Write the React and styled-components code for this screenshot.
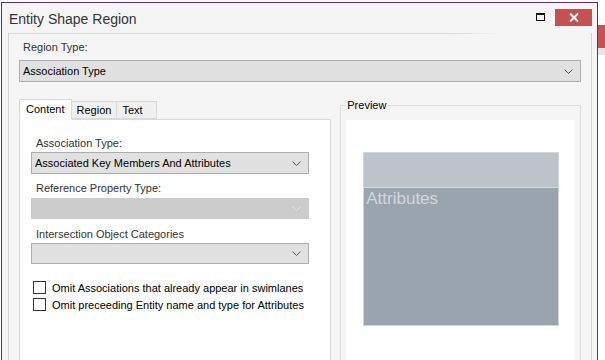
import React from 'react';
import styled, { createGlobalStyle } from 'styled-components';

const GlobalStyle = createGlobalStyle`
  html, body {
    margin: 0;
    padding: 0;
    background: #ffffff;
    overflow: hidden;
  }
  body {
    font-family: "Liberation Sans", Arial, sans-serif;
    font-size: 11px;
    color: #1e1e1e;
  }
`

const Desktop = styled.div`
  display: flex;
  align-items: flex-start;
  height: 360px;
  overflow: hidden;
`

const Window = styled.div`
  margin: 2px 0 0 1px;
  width: 597px;
  height: 380px;
  box-sizing: border-box;
  border: 1px solid #5a2f80;
  border-bottom: none;
  background: #f5f5f5;
  display: flex;
  flex-direction: column;
`

const TitleBar = styled.div`
  height: 30px;
  display: flex;
  align-items: center;
  padding-left: 7px;
`

const Title = styled.div`
  flex: 1;
  font-size: 14px;
  color: #333333;
  padding-top: 1px;
`

const MaxIcon = styled.div`
  width: 7px;
  height: 5px;
  border: 1px solid #111;
  border-top-width: 2px;
  margin-right: 10px;
  margin-top: -2px;
`

const CloseButton = styled.div`
  width: 37px;
  height: 17px;
  background: #c75050;
  margin-right: 5px;
  margin-top: -2px;
  display: flex;
  align-items: center;
  justify-content: center;
`

const Panel = styled.div`
  flex: 1;
  margin: 0 5px 0 6px;
  border-left: 1px solid #d2d2d2;
  border-right: 1px solid #d2d2d2;
  padding: 0 10px;
`

const TopFade = styled.div`
  height: 1px;
  margin: 0 -10px;
  background: linear-gradient(to right, #d6d6d6 0%, #d6d6d6 75%, rgba(214, 214, 214, 0) 85%);
`

const Label = styled.div`
  color: #333333;
  line-height: 15px;
  margin: ${p => p.$m || '0'};
  padding-left: 4px;
`

const Select = styled.div`
  box-sizing: border-box;
  height: ${p => p.$h || 22}px;
  width: ${p => (p.$w ? `${p.$w}px` : 'auto')};
  border: 1px solid ${p => (p.$disabled ? '#cccccc' : '#adadad')};
  background: ${p => (p.$disabled ? '#cccccc' : '#e1e1e1')};
  display: flex;
  align-items: center;
  padding: 0 7px 0 3px;
  color: #000;
  margin: ${p => p.$m || '0'};
`

const SelectText = styled.div`
  flex: 1;
  white-space: nowrap;
`

const Body = styled.div`
  display: flex;
  margin-top: 16px;
  gap: 9px;
`

const TabsCol = styled.div`
  width: 314px;
  display: flex;
  flex-direction: column;
`

const TabStrip = styled.div`
  display: flex;
  align-items: flex-end;
  height: 21px;
`

const Tab = styled.div`
  box-sizing: border-box;
  height: ${p => (p.$active ? 21 : 18)}px;
  min-width: ${p => p.$w || 0}px;
  padding: 0 ${p => (p.$active ? 6 : 5)}px ${p => (p.$active ? 2 : 0)}px;
  border: 1px solid #d9d9d9;
  border-bottom-color: ${p => (p.$active ? '#ffffff' : '#d9d9d9')};
  border-left-width: ${p => (p.$first ? 1 : 0)}px;
  background: ${p => (p.$active ? '#ffffff' : '#f0f0f0')};
  color: #000;
  display: flex;
  align-items: center;
  margin-bottom: ${p => (p.$active ? -1 : 0)}px;
  position: relative;
  z-index: ${p => (p.$active ? 1 : 0)};
`

const TabPanel = styled.div`
  box-sizing: border-box;
  height: 260px;
  border: 1px solid #d9d9d9;
  background: #ffffff;
  padding: 16px 0 0 12px;
`

const CheckList = styled.div`
  margin-top: 15px;
`

const CheckRow = styled.label`
  display: flex;
  align-items: center;
  gap: 6px;
  height: 17px;
  color: #000;
  margin-left: 1px;
`

const CheckBox = styled.span`
  width: 13px;
  height: 13px;
  box-sizing: border-box;
  border: 1px solid #333333;
  background: #ffffff;
`

const GroupBox = styled.fieldset`
  box-sizing: border-box;
  width: 242px;
  height: 270px;
  margin: 0;
  padding: 0 5px;
  border: 1px solid #dcdcdc;
  min-width: 0;
`

const Legend = styled.legend`
  padding: 0 1px;
  margin-left: 0;
  color: #000;
  line-height: 15px;
`

const PreviewArea = styled.div`
  margin-top: 7px;
  background: #ffffff;
  height: 240px;
  padding: 32px 0 0 17px;
  box-sizing: border-box;
`

const Shape = styled.div`
  width: 196px;
  height: 174px;
  box-sizing: border-box;
  border: 1px solid #d2d5d9;
  display: flex;
  flex-direction: column;
`

const ShapeHeader = styled.div`
  height: 34px;
  background: #bcc3cb;
  border-bottom: 1px solid #d6dade;
`

const ShapeBody = styled.div`
  flex: 1;
  background: #99a4ae;
  color: #d3d7db;
  font-size: 17px;
  padding: 1px 0 0 2px;
  line-height: 20px;
`

const SideStrip = styled.div`
  flex: 1;
  display: flex;
  flex-direction: column;
  padding-top: 25px;
`

const RedPatch = styled.div`
  height: 23px;
  background: #c75050;
`

const GrayPatch = styled.div`
  height: 7px;
  background: #e6e6e6;
`

const Chevron = ({ color = '#555' }) => (
  <svg width="9" height="5" viewBox="0 0 9 5">
    <path d="M0.5 0.5 L4.5 4.5 L8.5 0.5" fill="none" stroke={color} strokeWidth="1" />
  </svg>
)

const CloseX = () => (
  <svg width="10" height="9" viewBox="0 0 10 9">
    <path d="M1 0.5 L9 8.5 M9 0.5 L1 8.5" stroke="#fff" strokeWidth="2" />
  </svg>
)

const App = () => {
  return (
    <>
      <GlobalStyle />
      <Desktop>
        <Window>
          <TitleBar>
            <Title>Entity Shape Region</Title>
            <MaxIcon />
            <CloseButton><CloseX /></CloseButton>
          </TitleBar>
          <Panel>
            <TopFade />
            <Label $m="6px 0 5px 0">Region Type:</Label>
            <Select>
              <SelectText>Association Type</SelectText>
              <Chevron />
            </Select>
            <Body>
              <TabsCol>
                <TabStrip>
                  <Tab $active $first>Content</Tab>
                  <Tab>Region</Tab>
                  <Tab $w={40}>Text</Tab>
                </TabStrip>
                <TabPanel>
                  <Label>Association Type:</Label>
                  <Select $w={278} $m="1px 0 0 -1px">
                    <SelectText>Associated Key Members And Attributes</SelectText>
                    <Chevron />
                  </Select>
                  <Label $m="7px 0 0 0">Reference Property Type:</Label>
                  <Select $w={278} $disabled $h={21} $m="2px 0 0 -1px">
                    <SelectText />
                    <Chevron color="#e6e6e6" />
                  </Select>
                  <Label $m="8px 0 0 0">Intersection Object Categories</Label>
                  <Select $w={278} $h={21} $m="1px 0 0 -1px">
                    <SelectText />
                    <Chevron />
                  </Select>
                  <CheckList>
                    <CheckRow><CheckBox />Omit Associations that already appear in swimlanes</CheckRow>
                    <CheckRow><CheckBox />Omit preceeding Entity name and type for Attributes</CheckRow>
                  </CheckList>
                </TabPanel>
              </TabsCol>
              <GroupBox>
                <Legend>Preview</Legend>
                <PreviewArea>
                  <Shape>
                    <ShapeHeader />
                    <ShapeBody>Attributes</ShapeBody>
                  </Shape>
                </PreviewArea>
              </GroupBox>
            </Body>
          </Panel>
        </Window>
        <SideStrip>
          <RedPatch />
          <GrayPatch />
        </SideStrip>
      </Desktop>
    </>
  )
}

export default App
